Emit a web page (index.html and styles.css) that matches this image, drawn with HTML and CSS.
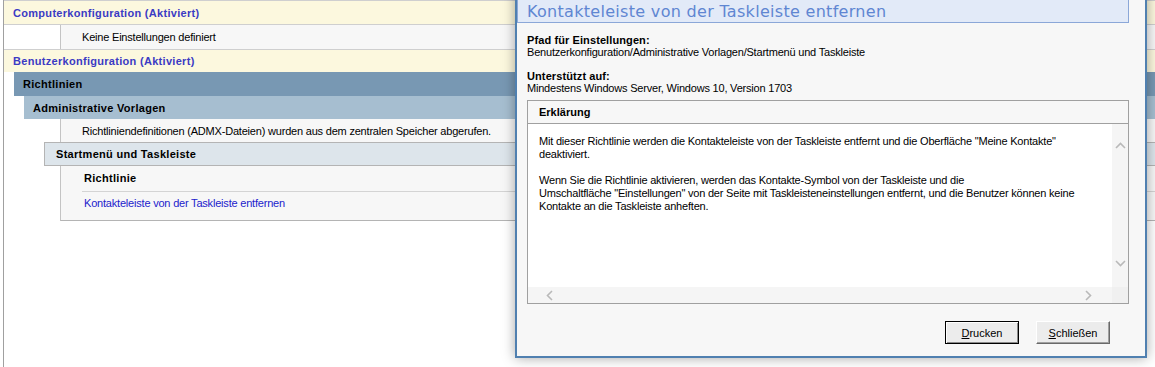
FILE: index.html
```html
<!DOCTYPE html>
<html lang="de">
<head>
  <meta charset="UTF-8">
  <meta name="viewport" content="width=device-width, initial-scale=1.0">
  <title>Gruppenrichtlinienbericht</title>
  <link rel="stylesheet" href="styles.css">
</head>
<body>
  <div class="report">
    <div class="cfg">Computerkonfiguration (Aktiviert)</div>
    <div class="note">Keine Einstellungen definiert</div>
    <div class="cfg cfg-second">Benutzerkonfiguration (Aktiviert)</div>
    <div class="level1">
      <div class="band band-rl">Richtlinien</div>
      <div class="level2">
        <div class="band band-av">Administrative Vorlagen</div>
        <div class="note note-admx">Richtliniendefinitionen (ADMX-Dateien) wurden aus dem zentralen Speicher abgerufen.</div>
        <div class="level3">
          <div class="band band-sm">Startmenü und Taskleiste</div>
          <div class="policy">
            <div class="policy-head">Richtlinie</div>
            <div class="policy-row"><a href="#">Kontakteleiste von der Taskleiste entfernen</a></div>
          </div>
        </div>
      </div>
    </div>
  </div>

  <div class="dialog">
    <div class="dlg-title">Kontakteleiste von der Taskleiste entfernen</div>
    <div class="dlg-body">
      <div class="info">
        <div class="info-label">Pfad für Einstellungen:</div>
        <div>Benutzerkonfiguration/Administrative Vorlagen/Startmenü und Taskleiste</div>
      </div>
      <div class="info">
        <div class="info-label">Unterstützt auf:</div>
        <div>Mindestens Windows Server, Windows 10, Version 1703</div>
      </div>
      <div class="explain">
        <div class="explain-head">Erklärung</div>
        <div class="explain-body">
          <div class="explain-text">
            Mit dieser Richtlinie werden die Kontakteleiste von der Taskleiste entfernt und die Oberfläche "Meine Kontakte"<br>
            deaktiviert.<br>
            <br>
            Wenn Sie die Richtlinie aktivieren, werden das Kontakte-Symbol von der Taskleiste und die<br>
            Umschaltfläche "Einstellungen" von der Seite mit Taskleisteneinstellungen entfernt, und die Benutzer können keine<br>
            Kontakte an die Taskleiste anheften.
          </div>
          <div class="vscroll">
            <svg width="11" height="7" viewBox="0 0 11 7"><path d="M1 6 L5.5 1.5 L10 6" fill="none" stroke="#b9b9b9" stroke-width="1.6"/></svg>
            <svg width="11" height="7" viewBox="0 0 11 7"><path d="M1 1 L5.5 5.5 L10 1" fill="none" stroke="#b9b9b9" stroke-width="1.6"/></svg>
          </div>
          <div class="hscroll">
            <svg width="7" height="11" viewBox="0 0 7 11"><path d="M6 1 L1.5 5.5 L6 10" fill="none" stroke="#b9b9b9" stroke-width="1.6"/></svg>
            <svg width="7" height="11" viewBox="0 0 7 11"><path d="M1 1 L5.5 5.5 L1 10" fill="none" stroke="#b9b9b9" stroke-width="1.6"/></svg>
          </div>
          <div class="corner"></div>
        </div>
      </div>
      <div class="buttons">
        <button class="btn btn-default"><u>D</u>rucken</button>
        <button class="btn"><u>S</u>chließen</button>
      </div>
    </div>
  </div>
</body>
</html>
```

FILE: styles.css
```css
body {
  margin: 0;
  font-family: "Liberation Sans", Arial, sans-serif;
  font-size: 11px;
  color: #000;
  background-color: #fff;
  overflow: hidden;
}
.report {
  margin-left: 3px;
  border-left: 1px solid #a0a0a0;
  height: 100vh;
  box-sizing: border-box;
}
.cfg {
  display: flex;
  align-items: center;
  height: 25px;
  box-sizing: border-box;
  padding-left: 9px;
  background-color: #fcf8de;
  border-top: 1px solid #cfcfcf;
  border-bottom: 1px solid #cfcfcf;
  color: #3b3bc4;
  font-weight: bold;
  letter-spacing: 0.3px;
}
.cfg-second {
  height: 23px;
  border-bottom: none;
}
.note {
  display: flex;
  align-items: center;
  height: 24px;
  box-sizing: border-box;
  margin-left: 56px;
  padding-left: 21px;
  background-color: #f7f7f7;
  border-left: 1px solid #c4c4c4;
  letter-spacing: -0.2px;
}
.note-admx {
  height: 23px;
  margin-left: 36px;
}
.level1 {
  margin-left: 10px;
}
.level2 {
  margin-left: 10px;
}
.level3 {
  margin-left: 20px;
}
.band {
  display: flex;
  align-items: center;
  box-sizing: border-box;
  font-weight: bold;
  letter-spacing: 0.3px;
}
.band-rl {
  height: 24px;
  padding-left: 9px;
  background-color: #7898b3;
}
.band-av {
  height: 23px;
  padding-left: 9px;
  background-color: #a6bed0;
}
.band-sm {
  height: 24px;
  padding-left: 11px;
  background-color: #dde5eb;
  border: 1px solid #b4b4b4;
  border-right: none;
}
.policy {
  height: 55px;
  box-sizing: border-box;
  margin-left: 16px;
  padding-left: 21px;
  background-color: #f7f7f7;
  border-left: 1px solid #c4c4c4;
  border-bottom: 1px solid #b4b4b4;
}
.policy-head {
  height: 26px;
  box-sizing: border-box;
  padding: 6px 0 0 2px;
  line-height: 13px;
  border-bottom: 1px solid #d4d4d4;
  font-weight: bold;
  letter-spacing: 0.3px;
}
.policy-row {
  padding: 5px 0 0 2px;
  line-height: 13px;
}
.policy-row a {
  color: #2222cc;
  text-decoration: none;
  letter-spacing: -0.2px;
}

/* dialog over the report */
.dialog {
  position: absolute;
  left: 515px;
  top: -10px;
  width: 632px;
  height: 368px;
  box-sizing: border-box;
  display: flex;
  flex-direction: column;
  background-color: #f7f7f7;
  border: 2px solid #5080b0;
  box-shadow: 0 0 12px rgba(0, 0, 0, 0.35);
}
.dlg-title {
  height: 31px;
  box-sizing: border-box;
  margin-right: 16px;
  padding: 10px 0 0 9px;
  background-color: #e2eaf8;
  border: 1px solid #8ba7d8;
  border-top: none;
  font-family: "DejaVu Sans", Verdana, sans-serif;
  font-size: 16px;
  line-height: 19px;
  letter-spacing: 0.3px;
  color: #5f86d2;
}
.dlg-body {
  flex: 1;
  display: flex;
  flex-direction: column;
  padding: 11px 16px 0 10px;
}
.info {
  line-height: 12px;
  letter-spacing: -0.2px;
}
.info + .info {
  margin-top: 12px;
}
.info-label {
  font-weight: bold;
  letter-spacing: 0.1px;
}
.explain {
  height: 204px;
  box-sizing: border-box;
  margin-top: 6px;
  display: flex;
  flex-direction: column;
  border: 1px solid #a0a0a0;
  background-color: #fff;
}
.explain-head {
  height: 23px;
  box-sizing: border-box;
  display: flex;
  align-items: center;
  padding-left: 11px;
  background-color: #f7f7f7;
  border-bottom: 1px solid #a0a0a0;
  font-weight: bold;
}
.explain-body {
  flex: 1;
  display: grid;
  grid-template-columns: 1fr 16px;
  grid-template-rows: 1fr 16px;
}
.explain-text {
  padding: 11px 0 0 11px;
  line-height: 13px;
  letter-spacing: -0.2px;
}
.vscroll {
  display: flex;
  flex-direction: column;
  align-items: center;
  justify-content: space-between;
  padding: 18px 0 20px;
  background-color: #f5f5f5;
}
.hscroll {
  display: flex;
  align-items: center;
  justify-content: space-between;
  padding: 0 20px 0 18px;
  background-color: #f5f5f5;
}
.corner {
  background-color: #f0f0f0;
}
.buttons {
  display: flex;
  justify-content: flex-end;
  gap: 17px;
  margin-top: 17px;
  padding-right: 19px;
}
.btn {
  width: 74px;
  height: 23px;
  box-sizing: border-box;
  padding: 0;
  font-family: inherit;
  font-size: 11px;
  color: #000;
  background-color: #ececec;
  border: 1px solid;
  border-color: #fff #696969 #696969 #fff;
  box-shadow: inset -1px -1px 0 #a0a0a0;
}
.btn-default {
  border-color: #000;
  box-shadow: inset 1px 1px 0 #fff, inset -1px -1px 0 #8a8a8a;
}
```
